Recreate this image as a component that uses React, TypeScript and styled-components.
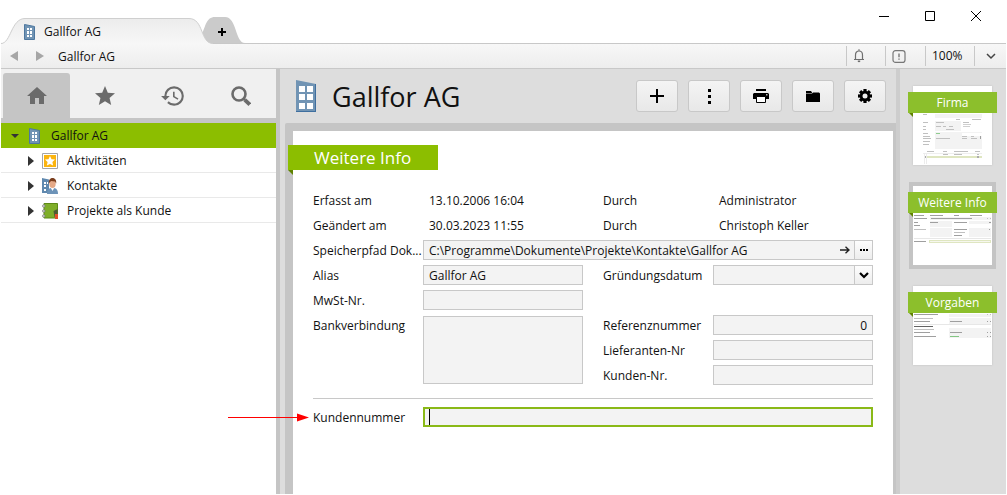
import React from "react";
import styled, { createGlobalStyle, css } from "styled-components";
import { MdHome, MdStar, MdHistory, MdAdd } from "react-icons/md";

const green = "#8cbe00";
const greenDark = "#5f8200";
const thumbGreen = "#8cbf2c";
const frame = "#c5c5c5";
const chrome = "#dddddd";
const line = "#c8c8c8";
const fieldBg = "#f3f3f3";

const GlobalStyle = createGlobalStyle`
  *, *::before, *::after { box-sizing: border-box; }
  body { margin: 0; background: #fff; }
  body, button, input, select, textarea {
    font-family: "Open Sans", "Noto Sans", sans-serif;
    font-size: 12px;
    line-height: 16px;
    color: #111;
  }
  button { margin: 0; padding: 0; border: 0; background: none; }
  svg { display: block; flex: none; }
`;

const Window = styled.div`
  display: flex;
  flex-direction: column;
  min-height: 100vh;
  padding: 0 1px 1px;
  background: #fff;
`;

/* ---------- title bar ---------- */

const TitleBar = styled.header`
  display: flex;
  justify-content: space-between;
  height: 43px;
`;

const DocTabs = styled.div`
  display: flex;
  align-items: flex-end;
`;

const DocTab = styled.button`
  position: relative;
  z-index: 1;
  display: flex;
  align-items: center;
  gap: 9px;
  width: 212px;
  height: 27px;
  margin-bottom: -1px;
  padding: 2px 0 0 23px;
`;

const NewTab = styled.button`
  position: relative;
  display: flex;
  align-items: center;
  justify-content: center;
  width: 46px;
  height: 26px;
  padding-top: 4px;
  margin-left: -14px;
`;

const TabShape = styled.svg`
  position: absolute;
  inset: 0;
`;

const TabContent = styled.span`
  position: relative;
`;

const WindowButtons = styled.div`
  display: flex;
  padding-right: 7px;
`;

const WindowButton = styled.button`
  display: flex;
  align-items: center;
  justify-content: center;
  width: 46px;
  height: 31px;
`;

/* ---------- breadcrumb bar ---------- */

const Toolbar = styled.nav`
  display: flex;
  align-items: stretch;
  height: 26px;
  border-top: 1px solid ${line};
  border-bottom: 1px solid ${line};
  background: linear-gradient(#f7f7f7, #ededed);
`;

const HistoryButton = styled.button`
  display: flex;
  align-items: center;
  justify-content: center;
  width: 26px;
`;

const Crumb = styled.span`
  flex: 1;
  display: flex;
  align-items: center;
  padding: 2px 0 0 5px;
`;

const ToolCell = styled.button<{ $width: number }>`
  display: flex;
  align-items: center;
  width: ${(p) => p.$width}px;
  margin: 2px 0;
  padding-left: 6px;
  border-left: 1px solid ${line};
`;

const ZoomMenu = styled(ToolCell)`
  justify-content: center;
  padding-left: 0;
`;

/* ---------- body ---------- */

const Body = styled.div`
  flex: 1;
  display: flex;
  align-items: stretch;
`;

const Sidebar = styled.aside`
  flex: none;
  width: 279px;
  border-right: 4px solid ${frame};
  background: #fff;
`;

const SideTabs = styled.div`
  display: flex;
  gap: 1px;
  height: 54px;
  padding: 4px 2px 0 2px;
  border-bottom: 5px solid ${frame};
  background: #f0f0f0;
`;

const SideTab = styled.button<{ $active?: boolean }>`
  flex: 1;
  display: flex;
  align-items: center;
  justify-content: center;
  border-radius: 3px 3px 0 0;
  color: #6b6b6b;
  background: ${(p) => (p.$active ? frame : "transparent")};
`;

const Tree = styled.ul`
  margin: 0;
  padding: 0;
  list-style: none;
`;

const TreeRow = styled.li<{ $root?: boolean }>`
  display: flex;
  align-items: center;
  height: 25px;
  padding: 2px 0 0 ${(p) => (p.$root ? 8 : 24)}px;
  border-bottom: 1px solid ${(p) => (p.$root ? green : "#e9e9e9")};
  background: ${(p) => (p.$root ? green : "#fff")};
`;

const Expander = styled.button`
  display: flex;
  justify-content: center;
  width: 11px;
`;

const TreeIcon = styled.span`
  display: flex;
  justify-content: center;
  width: 16px;
  margin: 0 9px 0 6px;
`;

const Main = styled.main`
  flex: 1;
  min-width: 0;
  display: flex;
  flex-direction: column;
  background: ${chrome};
`;

const PageHeader = styled.div`
  display: flex;
  align-items: center;
  height: 54px;
  padding: 0 10px 0 16px;
`;

const PageTitle = styled.h1`
  flex: 1;
  margin: 0;
  padding: 2px 0 0 16px;
  font-size: 27px;
  line-height: 36px;
  font-weight: 400;
`;

const Actions = styled.div`
  display: flex;
  gap: 10px;
`;

const ActionButton = styled.button`
  display: flex;
  align-items: center;
  justify-content: center;
  width: 42px;
  height: 32px;
  border: 1px solid ${line};
  border-radius: 3px;
  background: linear-gradient(#f4f4f4, #e8e8e8);
  color: #000;
`;

const SheetFrame = styled.div`
  flex: 1;
  display: flex;
  margin-left: 5px;
  padding: 8px 3px 0 8px;
  border-radius: 2px 0 0 0;
  background: ${frame};
`;

const Sheet = styled.section`
  flex: 1;
  min-width: 0;
  padding: 14px 20px 20px;
  background: #fff;
`;

const Ribbon = styled.h2`
  position: relative;
  width: 150px;
  margin: 0 0 20px -25px;
  padding-left: 26px;
  font-size: 17px;
  line-height: 25px;
  font-weight: 400;
  color: #fff;
  background: ${green};

  &::after {
    content: "";
    position: absolute;
    top: 100%;
    left: 0;
    border-top: 5px solid ${greenDark};
    border-left: 5px solid transparent;
  }
`;

/* ---------- form ---------- */

const FormGrid = styled.div`
  display: grid;
  grid-template-columns: 110px minmax(0, 1fr) 130px minmax(0, 1fr);
  grid-auto-rows: 20px;
  row-gap: 5px;
`;

const labelText = css`
  padding-top: 3px;
  white-space: nowrap;
`;

const Label = styled.label<{ $col?: number }>`
  ${labelText}
  ${(p) => p.$col && `grid-column: ${p.$col};`}
  ${(p) => p.$col === 3 && "padding-left: 20px;"}
`;

const Value = styled.output`
  ${labelText}
  padding-left: 6px;
`;

const fieldBox = css`
  width: 100%;
  min-width: 0;
  margin: 0;
  border: 1px solid ${line};
  border-radius: 0;
  outline: 0;
  background: ${fieldBg};
`;

const Input = styled.input<{ $numeric?: boolean }>`
  ${fieldBox}
  height: 20px;
  padding: 1px 5px 0;
  text-align: ${(p) => (p.$numeric ? "right" : "left")};
`;

const TextArea = styled.textarea`
  ${fieldBox}
  grid-row: span 3;
  align-self: center;
  height: 68px;
  padding: 2px 5px;
  resize: none;
`;

const Compound = styled.div<{ $wide?: boolean }>`
  ${fieldBox}
  display: flex;
  height: 20px;
  ${(p) => p.$wide && "grid-column: 2 / -1;"}
`;

const BareInput = styled.input`
  flex: 1;
  min-width: 0;
  padding: 1px 5px 0;
  border: 0;
  outline: 0;
  background: transparent;
`;

const BareSelect = styled.select`
  flex: 1;
  min-width: 0;
  margin: 0 -18px 0 0;
  padding: 0 24px 0 5px;
  border: 0;
  outline: 0;
  appearance: none;
  background: transparent;
`;

const InlineButton = styled.button`
  display: flex;
  align-items: center;
  justify-content: center;
  width: 18px;
`;

const endCell = css`
  width: 18px;
  border-left: 1px solid ${line};
  background: linear-gradient(#fdfdfd, #ededed);
`;

const EndButton = styled(InlineButton)`
  ${endCell}
`;

const SelectArrow = styled.span`
  ${endCell}
  display: flex;
  align-items: center;
  justify-content: center;
  pointer-events: none;
`;

const Divider = styled.hr`
  height: 1px;
  margin: 13px 0 8px;
  border: 0;
  background: ${line};
`;

const NumberRow = styled.div`
  position: relative;
  display: grid;
  grid-template-columns: 110px minmax(0, 1fr);
`;

const ActiveField = styled.div`
  position: relative;

  &::after {
    content: "";
    position: absolute;
    top: 2px;
    bottom: 2px;
    left: 6px;
    width: 1px;
    background: #000;
  }
`;

const ActiveInput = styled(Input)`
  display: block;
  border: 2px solid #8ab917;
  caret-color: transparent;
`;

const Pointer = styled.svg`
  position: absolute;
  top: 6px;
  left: -85px;
`;

/* ---------- page thumbnails ---------- */

const Pages = styled.nav`
  flex: none;
  width: 110px;
  display: flex;
  flex-direction: column;
  align-items: flex-start;
  gap: 21px;
  padding: 17px 0 0 13px;
  border-left: 4px solid #cdcdcd;
  background: ${chrome};
`;

const Thumb = styled.button<{ $active?: boolean }>`
  position: relative;
  width: 79px;
  height: 79px;
  background: #fff;
  box-shadow: ${(p) => (p.$active ? `0 0 0 4px #c4c4c4` : "0 0 2px #bdbdbd")};
`;

const ThumbDrawing = styled.svg`
  opacity: 0.7;
`;

const ThumbRibbon = styled.span`
  position: absolute;
  top: 6px;
  left: -5px;
  right: -5px;
  font-size: 12px;
  line-height: 21px;
  color: #fff;
  background: ${thumbGreen};

  &::after {
    content: "";
    position: absolute;
    top: 100%;
    left: 1px;
    border-top: 4px solid ${greenDark};
    border-left: 4px solid transparent;
  }
`;

/* ---------- drawings ---------- */

function Building({ width, height }: { width: number; height: number }) {
  return (
    <svg width={width} height={height} viewBox="0 0 20 32" preserveAspectRatio="none">
      <path d="M0 0 20 4V32H0Z" fill="#7194b4" />
      <path d="M0 31H20V32H0ZM19 4 20 4V32H19Z" fill="#3f6f9f" />
      <g fill="#fff">
        {[6, 14, 23].map((y) => (
          <React.Fragment key={y}>
            <rect x="3" y={y} width="6" height="6" />
            <rect x="11" y={y} width="6" height="6" />
          </React.Fragment>
        ))}
      </g>
    </svg>
  );
}

const SmallBuilding = () => (
  <svg width="11" height="16" viewBox="0 0 11 16">
    <path d="M.5 .5 10.5 2.5V15.5H.5Z" fill="#7194b4" stroke="#4d779f" />
    <path
      d="M3 4h2v2H3zM6 4h2v2H6zM3 7h2v3H3zM6 7h2v3H6zM3 11h2v2H3zM6 11h2v2H6z"
      fill="#fff"
    />
  </svg>
);

const ActivityIcon = () => (
  <svg width="16" height="16" viewBox="0 0 16 16">
    <path d="M.5 .5h15v15H.5z" fill="#fff" stroke="#a5a5a5" />
    <path d="M2 2h12v12H2z" fill="#fbb40f" />
    <path
      d="m8 3 1.5 3.2 3.5.4-2.6 2.4.7 3.5L8 10.900l-3.100 1.600.7-3.500L3 6.600l3.500-.4z"
      fill="#fff"
    />
  </svg>
);

const ContactsIcon = () => (
  <svg width="16" height="16" viewBox="0 0 16 16">
    <path d="M0 0 7 1.500V15H0Z" fill="#5f88ae" />
    <path d="M2 4h2v2h-2zM5 4h1v2h-1zM2 7h2v2h-2zM2 11h2v2h-2z" fill="#fff" />
    <path d="M5 16c0-4 1.500-5.500 4-6h3c2.500.5 4 2 4 6Z" fill="#6d93b8" />
    <path d="M8.500 9.500h4L10.500 13Z" fill="#fff" />
    <ellipse cx="10.500" cy="5.700" rx="3.200" ry="4.200" fill="#e5a987" />
    <path d="M6.800 5.500C6.500 1.500 8.500 0 10.500 0s4.200 1.500 3.700 5.500L13 3.500 9 3Z" fill="#7a3d1d" />
  </svg>
);

const ProjectIcon = () => (
  <svg width="16" height="16" viewBox="0 0 16 16">
    <path d="M2 .5h13.500v14.500H2z" fill="#7fae29" stroke="#5d8a17" />
    <path d="M11.500 8 15.500 6v8h-3z" fill="#4d5a34" />
    <path d="M13 11h3v5h-3z" fill="#e0502b" />
    <g fill="#d7d7d7" stroke="#777" strokeWidth=".7">
      <circle cx="1.800" cy="3" r="1.300" />
      <circle cx="1.800" cy="8" r="1.300" />
      <circle cx="1.800" cy="13" r="1.300" />
    </g>
  </svg>
);

const Triangle = ({ points, size = 10, fill = "#333" }: { points: string; size?: number; fill?: string }) => (
  <svg width={size} height={size} viewBox="0 0 10 10">
    <polygon points={points} fill={fill} />
  </svg>
);

const SearchIcon = () => (
  <svg width="20" height="20" viewBox="0 0 20 20" fill="none" stroke="currentColor">
    <circle cx="8" cy="8" r="6.500" strokeWidth="2.600" />
    <path d="M12.500 12.500 14 14" strokeWidth="2.600" />
    <path d="M13.800 13.800 18.800 18.600" strokeWidth="3.800" />
  </svg>
);

const DotsIcon = () => (
  <svg width="3" height="15" viewBox="0 0 3 15">
    <path d="M0 0h3v3H0zM0 6h3v3H0zM0 12h3v3H0z" />
  </svg>
);

const PrinterIcon = () => (
  <svg width="16" height="14" viewBox="0 0 16 14">
    <path d="M3 0h10v2H3z" />
    <path d="M1 4h14l1 1v5h-3V8H3v2H0V5Z" />
    <path d="M3.500 7.500h9v6h-9z" fill="#fff" stroke="#000" />
    <path d="M13 5h1.500v1.500H13z" fill="#bbb" />
  </svg>
);

const FolderIcon = () => (
  <svg width="14" height="11" viewBox="0 0 14 11">
    <path d="M0 0h5l1 1.500V2H0ZM0 2.500h6L7 1.500h6l1 1V11H0Z" />
  </svg>
);

const GearIcon = () => (
  <svg width="14" height="14" viewBox="-7 -7 14 14">
    {[0, 45, 90, 135].map((a) => (
      <rect key={a} x="-1.600" y="-7" width="3.200" height="14" transform={`rotate(${a})`} />
    ))}
    <circle r="5.200" />
    <circle r="2.500" fill="#eee" />
  </svg>
);

const BellIcon = () => (
  <svg width="12" height="14" viewBox="0 0 12 14" fill="none" stroke="#6f6f6f" strokeWidth="1.200">
    <path d="M1 10.500h10M2.500 10V6C2.500 3.500 4 2 6 2s3.500 1.500 3.500 4v4M6 .3V2" />
    <path d="M4.800 12.300h2.400" strokeWidth="1.600" />
  </svg>
);

const NoticeIcon = () => (
  <svg width="14" height="13" viewBox="0 0 14 13" fill="none" stroke="#777">
    <rect x="1" y=".6" width="12" height="11.800" rx="2.500" strokeWidth="1.200" />
    <path d="M7 3.500v3.700M7 8.500v1.300" strokeWidth="1.400" />
  </svg>
);

const Chevron = ({ color, width }: { color: string; width: number }) => (
  <svg width="10" height="7" viewBox="0 0 10 7" fill="none" stroke={color} strokeWidth={width}>
    <path d="M1 1 5 5 9 1" />
  </svg>
);

type Mark = [x: number, y: number, w: number, h: number, fill: string];

const pale = "#efefef";
const ink = "#a6a6a6";
const dark = "#777777";

const firmaMarks: Mark[] = [
  [22, 28, 47, 4, pale], [43, 33, 4, 1, ink], [59, 33, 9, 1, ink],
  [10, 28, 4, 1, ink], [10, 36, 5, 1, ink], [22, 35, 26, 10, pale], [23, 36, 8, 1, ink],
  [50, 36, 6, 1, ink], [50, 38, 8, 1, "#bbb"], [50, 40, 7, 1, "#bbb"],
  [10, 40, 3, 1, ink], [23, 40, 5, 1, ink], [30, 40, 3, 1, ink], [36, 40, 4, 1, ink],
  [10, 43, 3, 1, ink], [33, 43, 8, 1, ink], [22, 46, 47, 17, pale], [49, 47, 20, 3, "#fff"],
  [10, 47, 5, 1, ink], [23, 47, 4, 1, "#60b760"], [10, 50, 7, 1, ink], [10, 52, 8, 1, ink],
  [23, 52, 14, 1, ink], [49, 50, 5, 1, ink], [58, 50, 3, 1, ink], [67, 50, 1, 3, dark],
  [49, 52, 5, 1, ink], [58, 52, 6, 1, ink], [10, 55, 7, 1, ink], [10, 58, 6, 1, ink],
  [14, 65, 7, 1, ink], [30, 65, 4, 1, ink], [41, 65, 14, 1, ink], [62, 65, 5, 1, ink],
  [10, 67, 59, 1, "#e7e7e7"], [30, 68, 5, 1, ink], [41, 68, 8, 1, ink], [64, 68, 2, 1, ink],
  [12, 70, 57, 2, "#d2dca8"], [11, 70, 2, 2, "#888"], [64, 70, 2, 2, "#888"],
  [11, 67, 1, 11, "#e5e5e5"], [13, 67, 1, 11, "#e5e5e5"],
];

const infoMarks: Mark[] = [
  [1, 29, 10, 1, dark], [17, 29, 13, 1, dark], [41, 29, 5, 1, dark], [57, 29, 12, 1, dark],
  [17, 31, 61, 3, pale], [1, 32, 13, 1, dark], [18, 32, 41, 1, dark], [74, 32, 1, 1, ink], [77, 32, 1, 1, ink],
  [17, 35, 22, 6, pale], [56, 35, 22, 3, pale], [1, 36, 4, 1, dark], [17, 36, 8, 1, dark],
  [41, 36, 13, 1, dark], [76, 36, 2, 1, dark], [1, 39, 6, 1, dark],
  [17, 42, 22, 9, pale], [56, 42, 22, 9, pale], [1, 43, 12, 1, ink], [41, 43, 13, 1, dark],
  [76, 43, 1, 1, dark], [41, 46, 11, 1, ink], [41, 49, 8, 1, dark],
  [1, 52, 77, 1, "#ddd"], [1, 55, 12, 1, dark], [16, 54, 62, 3, "#d2dca8"], [17, 55, 60, 1, "#f3f5e8"],
];

const defaultsMarks: Mark[] = [
  [36, 28, 42, 3, pale], [1, 28, 24, 1, dark], [74, 28, 1, 1, ink], [77, 28, 1, 1, ink],
  [36, 32, 42, 6, pale], [1, 32, 19, 1, ink], [1, 35, 16, 1, dark], [37, 35, 12, 1, dark],
  [74, 35, 1, 1, dark], [77, 35, 1, 1, dark], [1, 38, 77, 1, "#ddd"], [1, 40, 19, 1, "#222"],
  [36, 42, 42, 10, pale], [1, 43, 20, 1, ink], [1, 46, 16, 1, dark], [37, 46, 12, 1, dark],
  [74, 46, 1, 1, dark], [77, 46, 1, 1, dark], [1, 50, 22, 1, dark], [37, 50, 9, 1, "#4fae4f"],
  [74, 50, 1, 1, dark], [77, 50, 1, 1, dark],
];

const pages: { name: string; marks: Mark[]; active?: boolean }[] = [
  { name: "Firma", marks: firmaMarks },
  { name: "Weitere Info", marks: infoMarks, active: true },
  { name: "Vorgaben", marks: defaultsMarks },
];

const treeItems = [
  { name: "Aktivitäten", icon: <ActivityIcon /> },
  { name: "Kontakte", icon: <ContactsIcon /> },
  { name: "Projekte als Kunde", icon: <ProjectIcon /> },
];

export default function App() {
  return (
    <Window>
      <GlobalStyle />
      <TitleBar>
        <DocTabs>
          <DocTab>
            <TabShape width="212" height="27" viewBox="0 0 212 27">
              <defs>
                <linearGradient id="tab" x1="0" y1="0" x2="0" y2="1">
                  <stop offset="0" stopColor="#ececec" />
                  <stop offset="1" stopColor="#f7f7f7" />
                </linearGradient>
              </defs>
              <path
                d="M0 26.500C10 26.500 10 1.500 24 1.500H188C203 1.500 199 26.500 212 26.500V27H0Z"
                fill="url(#tab)"
              />
              <path
                d="M0 26.500C10 26.500 10 1.500 24 1.500H188C203 1.500 199 26.500 212 26.500"
                fill="none"
                stroke="#cfcfcf"
              />
            </TabShape>
            <TabContent>
              <SmallBuilding />
            </TabContent>
            <TabContent>Gallfor AG</TabContent>
          </DocTab>
          <NewTab aria-label="Neuer Tab">
            <TabShape width="46" height="26" viewBox="0 0 46 26">
              <path d="M2 19C7 9 7 0 16 0H26C38 0 36 26 46 26H10C6 25 4 22 2 19Z" fill="#cbcbcb" />
            </TabShape>
            <TabContent>
              <svg width="8" height="8" viewBox="0 0 8 8">
                <path d="M3 0h2v3h3v2H5v3H3V5H0V3h3z" />
              </svg>
            </TabContent>
          </NewTab>
        </DocTabs>
        <WindowButtons>
          <WindowButton aria-label="Minimieren">
            <svg width="10" height="10" viewBox="0 0 10 10">
              <path d="M0 5h10v1H0z" />
            </svg>
          </WindowButton>
          <WindowButton aria-label="Maximieren">
            <svg width="10" height="10" viewBox="0 0 10 10">
              <path d="M.5 .5h9v9h-9z" fill="none" stroke="#000" />
            </svg>
          </WindowButton>
          <WindowButton aria-label="Schliessen">
            <svg width="10" height="10" viewBox="0 0 10 10">
              <path d="M0 0 10 10M10 0 0 10" stroke="#000" />
            </svg>
          </WindowButton>
        </WindowButtons>
      </TitleBar>

      <Toolbar>
        <HistoryButton aria-label="Zurück">
          <Triangle points="9,0 9,10 1,5" fill="#a6a6a6" />
        </HistoryButton>
        <HistoryButton aria-label="Vorwärts">
          <Triangle points="1,0 1,10 9,5" fill="#a6a6a6" />
        </HistoryButton>
        <Crumb>Gallfor AG</Crumb>
        <ToolCell $width={39} aria-label="Benachrichtigungen">
          <BellIcon />
        </ToolCell>
        <ToolCell $width={40} aria-label="Hinweise">
          <NoticeIcon />
        </ToolCell>
        <ToolCell $width={49}>100%</ToolCell>
        <ZoomMenu $width={32} aria-label="Zoom wählen">
          <Chevron color="#444" width={1.5} />
        </ZoomMenu>
      </Toolbar>

      <Body>
        <Sidebar>
          <SideTabs>
            <SideTab $active aria-label="Start">
              <MdHome size={24} />
            </SideTab>
            <SideTab aria-label="Favoriten">
              <MdStar size={24} />
            </SideTab>
            <SideTab aria-label="Verlauf">
              <MdHistory size={26} />
            </SideTab>
            <SideTab aria-label="Suche">
              <SearchIcon />
            </SideTab>
          </SideTabs>
          <Tree>
            <TreeRow $root>
              <Expander aria-label="Zuklappen">
                <Triangle points="1,3 9,3 5,7" />
              </Expander>
              <TreeIcon>
                <SmallBuilding />
              </TreeIcon>
              Gallfor AG
            </TreeRow>
            {treeItems.map((item) => (
              <TreeRow key={item.name}>
                <Expander aria-label="Aufklappen">
                  <Triangle points="2,0 8,5 2,10" />
                </Expander>
                <TreeIcon>{item.icon}</TreeIcon>
                {item.name}
              </TreeRow>
            ))}
          </Tree>
        </Sidebar>

        <Main>
          <PageHeader>
            <Building width={20} height={32} />
            <PageTitle>Gallfor AG</PageTitle>
            <Actions>
              <ActionButton aria-label="Neu">
                <MdAdd size={24} />
              </ActionButton>
              <ActionButton aria-label="Mehr">
                <DotsIcon />
              </ActionButton>
              <ActionButton aria-label="Drucken">
                <PrinterIcon />
              </ActionButton>
              <ActionButton aria-label="Ordner">
                <FolderIcon />
              </ActionButton>
              <ActionButton aria-label="Einstellungen">
                <GearIcon />
              </ActionButton>
            </Actions>
          </PageHeader>

          <SheetFrame>
            <Sheet>
              <Ribbon>Weitere Info</Ribbon>
              <FormGrid>
                <Label htmlFor="created">Erfasst am</Label>
                <Value id="created">13.10.2006 16:04</Value>
                <Label $col={3} htmlFor="createdBy">Durch</Label>
                <Value id="createdBy">Administrator</Value>

                <Label htmlFor="changed">Geändert am</Label>
                <Value id="changed">30.03.2023 11:55</Value>
                <Label $col={3} htmlFor="changedBy">Durch</Label>
                <Value id="changedBy">Christoph Keller</Value>

                <Label htmlFor="path">Speicherpfad Dok...</Label>
                <Compound $wide>
                  <BareInput
                    id="path"
                    defaultValue={"C:\\Programme\\Dokumente\\Projekte\\Kontakte\\Gallfor AG"}
                  />
                  <InlineButton aria-label="Öffnen">
                    <svg width="10" height="8" viewBox="0 0 10 8" fill="none" stroke="#222" strokeWidth="1.400">
                      <path d="M0 4h9M5.500 .7 9 4 5.500 7.300" />
                    </svg>
                  </InlineButton>
                  <EndButton aria-label="Durchsuchen">
                    <svg width="8" height="2" viewBox="0 0 8 2">
                      <path d="M0 0h2v2H0zM3 0h2v2H3zM6 0h2v2H6z" />
                    </svg>
                  </EndButton>
                </Compound>

                <Label htmlFor="alias">Alias</Label>
                <Input id="alias" defaultValue="Gallfor AG" />
                <Label $col={3} htmlFor="founded">Gründungsdatum</Label>
                <Compound>
                  <BareSelect id="founded">
                    <option></option>
                  </BareSelect>
                  <SelectArrow>
                    <Chevron color="#000" width={2.2} />
                  </SelectArrow>
                </Compound>

                <Label htmlFor="vat">MwSt-Nr.</Label>
                <Input id="vat" />

                <Label $col={1} htmlFor="bank">Bankverbindung</Label>
                <TextArea id="bank" />
                <Label $col={3} htmlFor="reference">Referenznummer</Label>
                <Input id="reference" $numeric defaultValue="0" />
                <Label $col={3} htmlFor="supplier">Lieferanten-Nr</Label>
                <Input id="supplier" />
                <Label $col={3} htmlFor="customer">Kunden-Nr.</Label>
                <Input id="customer" />
              </FormGrid>
              <Divider />
              <NumberRow>
                <Pointer width="81" height="9" viewBox="0 0 81 9">
                  <path d="M0 4h72v1H0z" fill="#f00" />
                  <path d="M69 .5 81 4.500 69 8.500Z" fill="#f00" />
                </Pointer>
                <Label htmlFor="customerNumber">Kundennummer</Label>
                <ActiveField>
                  <ActiveInput id="customerNumber" />
                </ActiveField>
              </NumberRow>
            </Sheet>
          </SheetFrame>
        </Main>

        <Pages>
          {pages.map((page) => (
            <Thumb key={page.name} $active={page.active}>
              <ThumbDrawing width="79" height="79" viewBox="0 0 79 79">
                {page.marks.map(([x, y, w, h, fill], i) => (
                  <rect key={i} x={x} y={y} width={w} height={h} fill={fill} />
                ))}
              </ThumbDrawing>
              <ThumbRibbon>{page.name}</ThumbRibbon>
            </Thumb>
          ))}
        </Pages>
      </Body>
    </Window>
  );
}
